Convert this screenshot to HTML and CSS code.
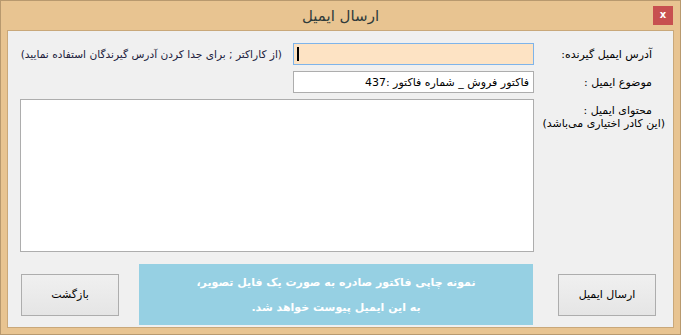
FILE: index.html
```html
<!DOCTYPE html>
<html lang="fa">
<head>
<meta charset="utf-8">
<title>ارسال ایمیل</title>
<link rel="stylesheet" href="styles.css">
</head>
<body>
<div class="window">
  <div class="titlebar">
    <span class="title">ارسال ایمیل</span>
    <span class="close">x</span>
  </div>
  <div class="client">
    <div class="row">
      <div class="label">آدرس ایمیل گیرنده:</div>
      <div class="field field-focus"><span class="caret"></span></div>
      <div class="hint">(از کاراکتر ; برای جدا کردن آدرس گیرندگان استفاده نمایید)</div>
    </div>
    <div class="row">
      <div class="label">موضوع ایمیل :</div>
      <div class="field"><span class="value">فاکتور فروش _ شماره فاکتور :437</span></div>
    </div>
    <div class="row-body">
      <div class="label-col">
        <div class="label-line1">محتوای ایمیل :</div>
        <div class="label-line2">(این کادر اختیاری می‌باشد)</div>
      </div>
      <div class="textarea"></div>
    </div>
    <div class="bottom">
      <div class="btn btn-send">ارسال ایمیل</div>
      <div class="info">
        <div>نمونه چاپی فاکتور صادره به صورت یک فایل تصویر،</div>
        <div>به این ایمیل پیوست خواهد شد.</div>
      </div>
      <div class="btn btn-back">بازگشت</div>
    </div>
  </div>
</div>
</body>
</html>
```
FILE: styles.css
```css
* { box-sizing: border-box; }
body {
  margin: 0;
  font-family: "DejaVu Sans", sans-serif;
  font-size: 11px;
  color: #000;
}
.window {
  width: 681px;
  height: 335px;
  border: 1px solid #b8996e;
  background: #e8c491;
  display: flex;
  flex-direction: column;
}
.titlebar {
  height: 29px;
  position: relative;
  display: flex;
  align-items: center;
  justify-content: center;
}
.title {
  font-size: 15px;
  color: #2f3b3b;
  direction: rtl;
}
.close {
  position: absolute;
  right: 7px;
  top: 5px;
  width: 20px;
  height: 19px;
  background: #c75050;
  color: #fff;
  font-weight: bold;
  font-size: 10px;
  line-height: 17px;
  text-align: center;
}
.client {
  flex: 1;
  margin: 0 6px 6px;
  border: 1px solid #c9a87a;
  background: #f0f0f0;
  padding-top: 12px;
}
.row {
  display: flex;
  direction: rtl;
  align-items: center;
  height: 22px;
  margin-bottom: 6px;
}
.label {
  width: 139px;
  padding-right: 21px;
  white-space: nowrap;
}
.field {
  width: 241px;
  height: 22px;
  border: 1px solid #adadad;
  background: #fff;
  display: flex;
  align-items: center;
  padding: 0 4px;
  direction: rtl;
}
.field-focus {
  border-color: #7eb4ea;
  background: #fde3c4;
  justify-content: flex-end;
}
.caret {
  width: 2px;
  height: 14px;
  background: #000;
  margin-left: -1px;
}
.value {
  white-space: nowrap;
}
.hint {
  margin-right: 11px;
  color: #20203c;
  font-size: 10.6px;
  white-space: nowrap;
}
.row-body {
  display: flex;
  direction: rtl;
  align-items: flex-start;
  height: 153px;
}
.label-col {
  width: 139px;
  padding-top: 5px;
  line-height: 13px;
}
.label-line1 {
  padding-right: 21px;
  white-space: nowrap;
}
.label-line2 {
  padding-right: 8px;
  white-space: nowrap;
}
.textarea {
  width: 514px;
  height: 153px;
  border: 1px solid #adadad;
  background: #fff;
}
.bottom {
  margin-top: 12px;
  display: flex;
  direction: rtl;
  align-items: center;
  height: 61px;
}
.btn {
  width: 98px;
  height: 42px;
  border: 1px solid #adadad;
  background: linear-gradient(#f0f0f0, #e5e5e5);
  display: flex;
  align-items: center;
  justify-content: center;
  font-size: 11px;
}
.btn-send { margin-right: 17px; }
.info {
  margin-right: 25px;
  width: 394px;
  height: 61px;
  background: #96d0e3;
  color: #fff;
  font-weight: bold;
  font-size: 11px;
  line-height: 25px;
  text-align: center;
  display: flex;
  flex-direction: column;
  justify-content: center;
}
.btn-back { margin-right: 20px; }
```
